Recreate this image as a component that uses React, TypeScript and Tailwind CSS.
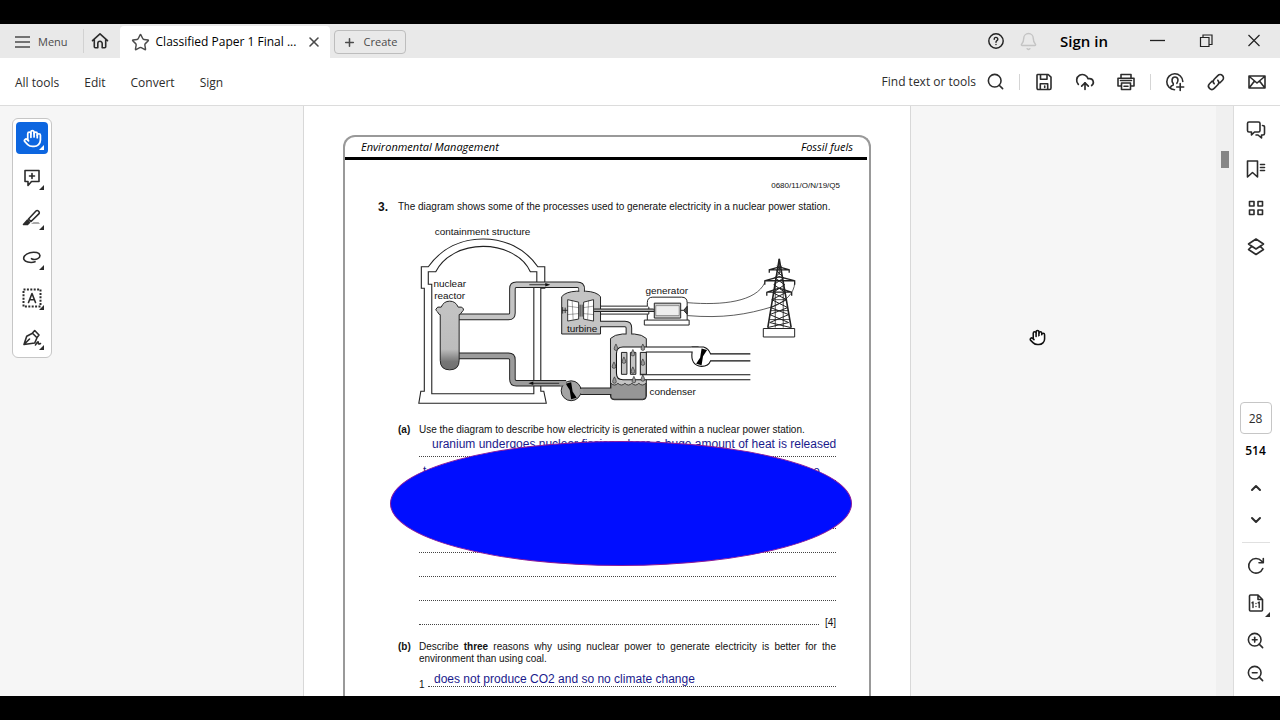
import type { ReactNode } from "react";
import {
  Bell,
  ChevronDown,
  ChevronUp,
  CloudUpload,
  Hand,
  Plus,
  Search,
  Star,
  X,
  ZoomIn,
  ZoomOut,
} from "lucide-react";

type IconProps = { children: ReactNode; className?: string };

function Glyph({ children, className = "size-5" }: IconProps) {
  return (
    <svg
      viewBox="0 0 20 20"
      fill="none"
      stroke="currentColor"
      strokeWidth="1.6"
      strokeLinecap="round"
      strokeLinejoin="round"
      className={className}
      aria-hidden
    >
      {children}
    </svg>
  );
}

function IconButton({ label, children }: { label: string; children: ReactNode }) {
  return (
    <button type="button" aria-label={label} className="flex size-5 shrink-0 items-center justify-center">
      {children}
    </button>
  );
}

function TitleBar() {
  return (
    <header className="flex h-[34px] shrink-0 items-center justify-between bg-[#e9e9e9] text-[#4b4b4b]">
      <div className="flex h-full items-center">
        <button type="button" className="flex items-center gap-2 pl-[15px] pt-[2px] text-[11px]">
          <svg viewBox="0 0 15 12" className="h-3 w-[15px]" stroke="currentColor" strokeWidth="1.5" aria-hidden>
            <path d="M0 1h15M0 6h15M0 11h15" />
          </svg>
          Menu
        </button>
        <span className="ml-[15px] h-6 w-px bg-[#d2d2d2]" />
        <button type="button" aria-label="Home" className="px-[6px] text-[#2c2c2c]">
          <Glyph>
            <path d="M2.5 9.7 10 2.8l7.5 6.9M4.3 8.5v7.3c0 .6.4 1 1 1h2.5v-4.3a2.2 2.2 0 0 1 4.4 0v4.3h2.5c.6 0 1-.4 1-1V8.5" />
          </Glyph>
        </button>
        <div className="flex h-full items-end pl-1">
          <div className="flex h-8 w-[210px] items-center rounded-t bg-white pl-[11px] pr-2">
            <Star size={19} strokeWidth={1.8} />
            <span className="ml-[6px] flex-1 whitespace-nowrap text-[12px] text-black">Classified Paper 1 Final ...</span>
            <button type="button" aria-label="Close tab">
              <X size={16} strokeWidth={2.4} />
            </button>
          </div>
        </div>
        <button
          type="button"
          className="ml-1 mt-[2px] flex h-6 items-center gap-2 rounded border border-[#bdbdbd] px-2 text-[11px]"
        >
          <Plus size={13} strokeWidth={2.8} />
          Create
        </button>
      </div>

      <div className="flex items-center text-[#222]">
        <IconButton label="Help">
          <Glyph className="size-[18px]">
            <circle cx="10" cy="10" r="8" />
            <path d="M8 8a2 2 0 1 1 3 1.7c-.7.4-1 .8-1 1.6M10 13.8v.1" />
          </Glyph>
        </IconButton>
        <span className="ml-3 text-[#c4c4c4]">
          <IconButton label="Notifications">
            <Bell size={19} strokeWidth={1.8} />
          </IconButton>
        </span>
        <button type="button" className="ml-[22px] text-[15px] font-semibold text-black">
          Sign in
        </button>
        <div className="ml-10 flex items-center gap-7 pr-4">
          <IconButton label="Minimize">
            <svg viewBox="0 0 16 16" className="size-4" stroke="currentColor" strokeWidth="1.3" aria-hidden>
              <path d="M0 7.5h15" />
            </svg>
          </IconButton>
          <IconButton label="Restore">
            <svg viewBox="0 0 16 16" className="size-4" fill="none" stroke="currentColor" strokeWidth="1.2" aria-hidden>
              <path d="M2.5 4.5H11v9H2.5zM5 4.5V2h9v9.5h-3" />
            </svg>
          </IconButton>
          <IconButton label="Close">
            <svg viewBox="0 0 16 16" className="size-4" stroke="currentColor" strokeWidth="1.2" aria-hidden>
              <path d="m2.5 2 11 11m0-11-11 11" />
            </svg>
          </IconButton>
        </div>
      </div>
    </header>
  );
}

function Toolbar() {
  return (
    <nav className="flex h-12 shrink-0 items-center justify-between border-b border-[#dcdcdc] bg-white text-[#2c2c2c]">
      <div className="flex gap-[25px] pl-[15px] pt-[2px] text-[12px]">
        <button type="button">All tools</button>
        <button type="button">Edit</button>
        <button type="button">Convert</button>
        <button type="button">Sign</button>
      </div>
      <div className="flex items-center gap-[21px] pr-[13px]">
        <button type="button" className="flex items-center gap-[10px] text-[12px]">
          Find text or tools
          <Search size={19} strokeWidth={2} />
        </button>
        <span className="-mx-[7px] h-4 w-px bg-[#d5d5d5]" />
        <IconButton label="Save">
          <Glyph>
            <path d="M3.5 2.5h10.7l2.8 2.6v11c0 .8-.5 1.4-1.3 1.4H4.3c-.8 0-1.3-.6-1.3-1.4V3.3c0-.5.2-.8.5-.8zM6.5 2.7v4.5H13V2.7M6.300 17.300v-5.500h7.400v5.500" />
            <path d="M10.7 14v1.5" />
          </Glyph>
        </IconButton>
        <IconButton label="Upload">
          <CloudUpload size={20} strokeWidth={2} />
        </IconButton>
        <IconButton label="Print">
          <Glyph>
            <path d="M5 6V2.5h10V6M4.5 14H2V6.200h16V14h-2.500M5.500 11h9v6.500h-9zM8 14.200h4M4.500 8.500h11" />
          </Glyph>
        </IconButton>
        <span className="-mx-[7px] h-4 w-px bg-[#d5d5d5]" />
        <IconButton label="Share">
          <Glyph>
            <path d="M17.8 9.5A8 8 0 1 0 9.5 17.8M5.500 15.500c.3-1.700 1.600-2.200 2.700-2.600v-1.300c-1.900-2.200-1.600-6.600 1.800-6.600s3.700 4 1.900 6.300M15.200 11.500v7M11.700 15h7" />
          </Glyph>
        </IconButton>
        <IconButton label="Copy link">
          <Glyph>
            <path d="M8.2 11.8a3.3 3.3 0 0 1 0-4.6l3.6-3.6a3.3 3.3 0 0 1 4.7 4.7L14 10.8M11.8 8.2a3.3 3.3 0 0 1 0 4.6l-3.6 3.6a3.3 3.3 0 0 1-4.7-4.7L6 9.200" />
          </Glyph>
        </IconButton>
        <IconButton label="Email">
          <Glyph>
            <path d="M2 4h16v12H2zM2.300 4.500 10 11l7.700-6.500M2.300 15.700 7.500 9M17.700 15.700 12.500 9" />
          </Glyph>
        </IconButton>
      </div>
    </nav>
  );
}

const tools = [
  { name: "Pan", icon: <Hand size={19} strokeWidth={2.2} />, active: true },
  {
    name: "Add comment",
    icon: (
      <Glyph>
        <path d="M3 2.5h14v11H9.500L6 17.500v-4H3zM10 5.500v5M7.500 8h5" />
      </Glyph>
    ),
  },
  {
    name: "Highlight",
    icon: (
      <Glyph>
        <path d="M6.5 11 14 3a1.600 1.600 0 0 1 2.300 0l.5.5a1.600 1.600 0 0 1 0 2.300L9 13.500z" />
        <path d="m5.5 12-4 4.500h4l2-2z" fill="currentColor" />
        <path d="M9 16h9l-1.500-2h-5z" fill="#aaa" stroke="none" />
      </Glyph>
    ),
  },
  {
    name: "Draw",
    icon: (
      <Glyph>
        <path d="M9.5 10.700c2 1 4.500.9 6.300-.1 3.200-1.800 2.700-5-1-6C10.500 3.500 5 4.800 2.500 8c-1.800 2.500-.5 5 3.300 6 2.700.7 5.200.5 7.200-.3" />
      </Glyph>
    ),
  },
  {
    name: "Select text",
    icon: (
      <Glyph>
        <path d="M1.5 1.5h17v17h-17z" strokeDasharray="2 1.4" strokeLinecap="butt" strokeWidth="2" />
        <path d="M6.5 14.5 10 5.5l3.500 9M7.700 11.700h4.600" />
      </Glyph>
    ),
  },
  {
    name: "Sign",
    icon: (
      <Glyph>
        <path d="m2 16.500 2.700-8.300 5.800-3 4.500 4.500-2.300 5.300L2 16.500l5.500-5.500M10.500 5l2.200-2.500L17 7l-2 2.500M13.500 17c1.500-3 3-4 2.800-2.200-.2 1.500.7 1.500 2.200.7" />
      </Glyph>
    ),
  },
];

function ToolPalette() {
  return (
    <div className="ml-3 mt-3 flex w-10 flex-col gap-2 self-start rounded-md border border-[#c6c6c6] bg-white p-[3px]">
      {tools.map((tool) => (
        <button
          key={tool.name}
          type="button"
          aria-label={tool.name}
          className={
            tool.active
              ? "relative flex size-8 items-center justify-center rounded-sm bg-[#0d66e0] text-white"
              : "relative flex size-8 items-center justify-center rounded-sm text-[#2c2c2c]"
          }
        >
          {tool.icon}
          <svg viewBox="0 0 6 6" className="absolute bottom-1 right-1 size-[5px]" fill="currentColor" aria-hidden>
            <path d="M6 0v6H0z" />
          </svg>
        </button>
      ))}
    </div>
  );
}

function PumpBlades({ cx, cy, flip }: { cx: number; cy: number; flip?: boolean }) {
  return (
    <g transform={`translate(${cx} ${cy}) scale(${flip ? -1 : 1} 1)`} fill="#000" stroke="none">
      <path d="M-5.5-7 0-8.5 1.5 1-1 0zM5.5 7 0 8.5-1.5-1 1 0z" />
    </g>
  );
}

const droplets = [
  [616, 348], [643, 348], [614, 366], [643, 363], [614.5, 381], [634, 380.5],
  [643, 379], [624, 361], [633, 353.5], [633, 371],
];

function Pylon() {
  return (
    <g fill="none" stroke="#222" strokeWidth="1">
      <path d="M780 259 768.5 328M780 259 792 328" strokeWidth="1.6" />
      <path d="M780 259v16M777.500 266l5 5-7 7 10 7-12 8 14 7-16 8 18 7-19 8 21 5M782.500 266l-5 5 7 7-10 7 12 8-14 7 16 8-18 7 19 8-21 5" />
      <path d="M773 300h14M771 311h18M770 320h20M776 282v46M784 282v46" strokeWidth=".8" />
      <path d="M770 273v-3l10-3 10 3v3M770 270h20M765.500 285v-4l14.500-4 15.500 4v4M765.500 281h30M767.500 296v-3.500l12.500-4 12.500 4v3.500M767.500 292.500h25" strokeWidth="1.3" />
      <path d="M764 329h31.500v8.500H764z" fill="#fff" />
    </g>
  );
}

function PowerStationDiagram() {
  return (
    <svg
      viewBox="377 222 460 188"
      className="mt-[9px] block w-full"
      role="img"
      aria-label="Nuclear power station"
      fontFamily="'Liberation Sans', Arial, sans-serif"
      fontSize="10"
    >
      <defs>
        <linearGradient id="vessel" x1="0" y1="0" x2="0" y2="1">
          <stop offset="0" stopColor="#c4c4c4" />
          <stop offset=".7" stopColor="#bdbdbd" />
          <stop offset=".88" stopColor="#777" />
          <stop offset="1" stopColor="#707070" />
        </linearGradient>
      </defs>

      {/* containment structure */}
      <g fill="none" stroke="#222" strokeWidth="1.1">
        <path d="M420 392h3.500V288.500h-3V267h7C441 248 461 239 482.500 239s42 9 55 28h7v21.500h-4V392h3l2.500 12h-128z" fill="#fff" />
        <path d="M431 394.500V284.500h-3.500V272h7.500c8-16 27-25.500 47.500-25.500S523 256 530 272h6.500v14h-3v108.500z" />
      </g>

      {/* steam and return pipes */}
      <g fill="none" strokeLinejoin="round">
        <path d="M457 317.300h51q4 0 4-4V289q0-4 4-4h61q4.500 0 4.500 4v5" stroke="#222" strokeWidth="6.6" />
        <path d="M457 317.300h51q4 0 4-4V289q0-4 4-4h61q4.500 0 4.500 4v9" stroke="#c4c4c4" strokeWidth="4.6" />
        <path d="M457 356.500h51q4 0 4 4V380q0 4 4 4h50" stroke="#222" strokeWidth="6.6" />
        <path d="M457 356.500h51q4 0 4 4V380q0 4 4 4h50" stroke="#9c9c9c" strokeWidth="4.6" />
        <path d="M576 392h38" stroke="#222" strokeWidth="7.6" />
        <path d="M598 324.500h27q4 0 4 4V337" stroke="#222" strokeWidth="6.6" />
      </g>

      {/* reactor vessel */}
      <path
        d="M439.500 315q-1.500 0-2-1.500t-2-2.500 1.500-3.500h3.500q2.500-6 8.500-6t8.500 6h3.500q3 2 1.500 3.500t-2 2.500-2 1.500v46q0 9.500-9.500 9.500t-9.500-9.500z"
        fill="url(#vessel)"
        stroke="#222"
      />

      {/* turbine */}
      <path d="M561.500 334.500V297q4-5 15-5.500h9q11 .5 15 5.500v37.500z" fill="#c4c4c4" stroke="#222" />
      <path d="M581.500 287v7" stroke="#c4c4c4" strokeWidth="4.6" />
      <path d="M600.500 306.500H649v8h-48.500z" fill="#fff" stroke="#222" />
      <path d="M594 310.700h61" stroke="#222" strokeWidth="3.4" />
      <path d="M594 310.700h61" stroke="#aaa" strokeWidth="1.4" />
      <g fill="#fff" stroke="#222" strokeWidth=".9">
        <path d="m567.500 300 11 2.500v17l-11 2zM593.500 300l-10 2.500v17l10 2z" />
        <path d="m567.500 306.500 11 1.500M567.500 315l11-1M593.500 306.500l-10 1.500M593.500 315l-10-1M572 301l1 19M588.500 301l-1 19" strokeWidth=".4" />
        <path d="M562.500 307.500v6.500M565 308v5.500M562 310.700h5.500M580 305v12M582 305v12" />
      </g>

      {/* generator */}
      <g fill="#fff" stroke="#222">
        <path d="M647.500 320.500v-5.800M647.500 306.500V303q0-5.500 5.500-5.500h29q5.500 0 5.500 5.500v17.500" />
        <path d="M644.500 320.500h45v5h-45z" />
        <path d="M654.500 303.500H681v15h-26.500z" fill="#ccc" />
        <path d="M656 306h23.500v10H656z" fill="#eee" strokeWidth=".4" />
        <path d="M681 310.700h3l3.500-4v8l-3.500-4" fill="#555" />
      </g>

      <g fill="none" stroke="#333" strokeWidth=".8">
        <path d="M687.500 303c36 3 69-1 78-20M687.500 316c36 3 60-1 86-9 12-4 22-14 22-24" />
      </g>
      <Pylon />

      {/* condenser */}
      <path d="M610.500 397V339q4-4 12-4.500h12q8 .5 12 4.500v58q0 3.500-3.500 3.500h-29q-3.500 0-3.500-3.500z" fill="#c4c4c4" stroke="#222" />
      <path d="M611 384q3.500 3.500 7 0 3.500 3.500 7 0 3.500 3.500 7 0 3.500 3.500 7 0 3.500 3.500 7 0v13q0 3-3 3h-29q-3 0-3-3z" fill="#969696" stroke="#222" strokeWidth=".8" />
      <path d="M597 324.500h28q4 0 4 4V338" fill="none" stroke="#c4c4c4" strokeWidth="4.6" />
      <path d="M578 392h34" stroke="#969696" strokeWidth="5.6" />
      <path d="M751 380.500H623q-6.500 0-6.500-6.500v-20q0-6.500 6.500-6.500h82v5h-65v23h111z" fill="#fff" />
      <path d="M751 380.500H623q-6.500 0-6.500-6.500v-20q0-6.500 6.500-6.500h76M640 375.500h111" fill="none" stroke="#111" strokeWidth="1.1" />
      <g fill="#c4c4c4" stroke="#222">
        <path d="M621.500 353h5.500v22h-5.500zM630.500 353h5.500v22h-5.500zM640.500 353h6v22h-6z" />
      </g>
      <g fill="#999" stroke="#222" strokeWidth=".6">
        {droplets.map(([x, y]) => (
          <path key={`${x}-${y}`} d={`M${x} ${y - 3.5}q-3.6 6.5 0 6.500t0-6.500z`} />
        ))}
      </g>

      {/* pumps */}
      <circle cx="571" cy="391.5" r="10" fill="#a4a4a4" stroke="#222" />
      <PumpBlades cx={571} cy={391.5} />
      <path d="M560 384h6M579 392h4" stroke="#9c9c9c" strokeWidth="4.6" />
      <path d="M692 352.500q-1.500 14 10 14.500 7 0 9-5.500h40v-7h-40q-2-5.500-7-7h-12z" fill="#fff" />
      <path
        d="M646 352.500h46.500q-2 13.500 9.500 14.500 7 0 9-5.500h40M751 354.500h-40q-2-5.500-7-7h-12"
        fill="none"
        stroke="#111"
        strokeWidth="1.1"
      />
      <PumpBlades cx={702} cy={357.5} flip />

      {/* flow arrows */}
      <path d="M529 285h18M559 384h-27" stroke="#111" strokeWidth=".8" />
      <path d="m550 285-5-1.800v3.600zM528 384l5-1.800v3.600z" fill="#111" />

      <g fill="#111" textAnchor="middle">
        <text x="482" y="235">containment structure</text>
        <text x="449" y="287">nuclear</text>
        <text x="449" y="299">reactor</text>
        <text x="582" y="332">turbine</text>
        <text x="667" y="294">generator</text>
        <text x="673" y="396">condenser</text>
      </g>
    </svg>
  );
}

function DottedLine() {
  return <div className="h-6 border-b border-dotted border-[#444]" />;
}

function DocumentPage() {
  return (
    <main className="w-[608px] overflow-hidden border-x border-[#d8d8d8] bg-white px-[39px] pt-[29px] font-['Liberation_Sans',Arial,sans-serif] text-[10px] leading-3 text-[#111]">
      <article className="h-full rounded-t-xl border-2 border-b-0 border-[#999]">
        <div className="flex h-5 items-center justify-between px-4 font-['Open_Sans',sans-serif] text-[11px] font-medium italic text-black">
          <span>Environmental Management</span>
          <span>Fossil fuels</span>
        </div>
        <div className="mr-[2px] h-[3px] bg-black" />

        <div className="px-[33px]">
          <p className="-mr-1 mt-5 text-right text-[8px]">0680/11/O/N/19/Q5</p>
          <div className="mt-[9px] flex">
            <b className="w-5 shrink-0 text-[12px]">3.</b>
            <h1 className="whitespace-nowrap">
              The diagram shows some of the processes used to generate electricity in a nuclear power station.
            </h1>
          </div>
          <PowerStationDiagram />

          <section className="relative mt-[15px] flex pl-5">
            <b className="w-[21px] shrink-0">(a)</b>
            <div className="min-w-0 flex-1">
              <p className="whitespace-nowrap">
                Use the diagram to describe how electricity is generated within a nuclear power station.
              </p>
              <div className="h-[21px] whitespace-nowrap border-b border-dotted border-[#444] pl-[13px] pt-[2px] text-[12px] text-[#1a1a8c]">
                uranium undergoes nuclear fission where a huge amount of heat is released
              </div>
              <div className="flex h-6 justify-between border-b border-dotted border-[#444] pl-1 pr-4 pt-2 text-[12px] text-[#1a1a8c]">
                <span>t</span>
                <span>e</span>
              </div>
              <DottedLine />
              <DottedLine />
              <DottedLine />
              <DottedLine />
              <DottedLine />
              <div className="flex items-end justify-between">
                <div className="h-6 w-[400px] border-b border-dotted border-[#444]" />
                <span className="-mb-1">[4]</span>
              </div>
            </div>
            <div className="absolute -right-4 left-3 top-[17px] h-[125px] rounded-[50%] border border-[#8a1a9a] bg-[#000dff]" />
          </section>

          <section className="mt-4 flex pl-5">
            <b className="w-[21px] shrink-0">(b)</b>
            <div className="min-w-0 flex-1">
              <p className="text-justify">
                Describe <b>three</b> reasons why using nuclear power to generate electricity is better for the
                environment than using coal.
              </p>
              <div className="mt-[6px] flex items-end">
                <span className="-mb-1 w-[9px] shrink-0">1</span>
                <div className="h-4 flex-1 whitespace-nowrap border-b border-dotted border-[#444] pl-[6px] pt-[2px] text-[12px] text-[#1a1a8c]">
                  does not produce CO2 and so no climate change
                </div>
              </div>
            </div>
          </section>
        </div>
      </article>
    </main>
  );
}

function SideRail() {
  return (
    <aside className="flex w-[47px] shrink-0 flex-col items-center justify-between border-l border-[#dcdcdc] bg-white pr-[3px] text-[#2c2c2c]">
      <div className="flex flex-col gap-[19px] pt-[14px]">
        <IconButton label="Comments">
          <Glyph>
            <path d="M3 2h9.500c1 0 1.500.5 1.500 1.500v7c0 1-.5 1.500-1.500 1.500H8.500L5.500 15v-3H3c-1 0-1.500-.5-1.500-1.500v-7C1.500 2.500 2 2 3 2zM16.500 5.500c1.200 0 2 .5 2 1.500v6.500c0 1-.5 1.500-1.500 1.500h-1.500v3L12 15H10" />
          </Glyph>
        </IconButton>
        <IconButton label="Bookmarks">
          <Glyph>
            <path d="M1.500 2h10v16l-5-4.500-5 4.500zM14.500 5.500h4M14.500 8.500h4M14.500 11.500h4" />
          </Glyph>
        </IconButton>
        <IconButton label="Page thumbnails">
          <Glyph>
            <path d="M3.500 3.500h4.500v4.500H3.500zM12 3.500h4.500v4.500H12zM3.500 12h4.500v4.500H3.500zM12 12h4.500v4.500H12z" />
          </Glyph>
        </IconButton>
        <IconButton label="Layers">
          <Glyph>
            <path d="m10 2 7.500 5L10 12 2.500 7zM5 10.200 2.500 12.500l7.500 5 7.500-5-2.500-2.300" />
          </Glyph>
        </IconButton>
      </div>

      <div className="flex flex-col items-center pb-[13px]">
        <input
          aria-label="Page number"
          defaultValue="28"
          className="size-8 rounded border border-[#c6c6c6] text-center text-[12px]"
        />
        <span className="mt-2 text-[12px] font-semibold text-black">514</span>
        <div className="mt-[18px] flex flex-col gap-3">
          <IconButton label="Previous page">
            <ChevronUp size={16} strokeWidth={3} />
          </IconButton>
          <IconButton label="Next page">
            <ChevronDown size={16} strokeWidth={3} />
          </IconButton>
        </div>
        <span className="mt-3 h-px w-7 bg-[#e0e0e0]" />
        <div className="mt-[13px] flex flex-col gap-[17px]">
          <IconButton label="Rotate">
            <Glyph>
              <path d="M16.800 12.500A7.300 7.300 0 1 1 15.500 5l1.200 1.300M17.300 2.500v4.300h-4.300" />
            </Glyph>
          </IconButton>
          <button type="button" aria-label="Actual size" className="relative flex size-5 items-center justify-center">
            <Glyph>
              <path d="M4.500 2H12l4.500 4.500V17c0 .6-.4 1-1 1h-11c-.6 0-1-.4-1-1V3c0-.6.4-1 1-1zM12 2v4.500h4.500" />
              <path d="m6 9.800 1-.8v5.500M12.200 9.800l1-.8v5.500M10 10.500v.1M10 13.500v.1" strokeWidth="1.4" />
            </Glyph>
            <svg viewBox="0 0 6 6" className="absolute -bottom-1 -right-1 size-[5px]" fill="currentColor" aria-hidden>
              <path d="M6 0v6H0z" />
            </svg>
          </button>
          <div className="flex flex-col gap-[13px]">
            <IconButton label="Zoom in">
              <ZoomIn size={19} strokeWidth={2} />
            </IconButton>
            <IconButton label="Zoom out">
              <ZoomOut size={19} strokeWidth={2} />
            </IconButton>
          </div>
        </div>
      </div>
    </aside>
  );
}

export default function App() {
  return (
    <div className="flex h-screen flex-col bg-black py-6 font-['Open_Sans','Noto_Sans',sans-serif]">
      <TitleBar />
      <Toolbar />
      <div className="flex min-h-0 flex-1">
        <div className="relative grid min-w-0 flex-1 grid-cols-[1fr_auto_1fr] overflow-hidden bg-[#f6f6f6] pr-[2px]">
          <ToolPalette />
          <DocumentPage />
          <Hand
            size={17}
            strokeWidth={2.2}
            fill="#fff"
            className="absolute left-[1029px] top-[223px] text-[#111]"
          />
        </div>
        <div className="flex w-[17px] shrink-0 justify-center bg-[#f0f0f0] pt-[45px]">
          <div className="h-[17px] w-2 bg-[#868686]" />
        </div>
        <SideRail />
      </div>
    </div>
  );
}
